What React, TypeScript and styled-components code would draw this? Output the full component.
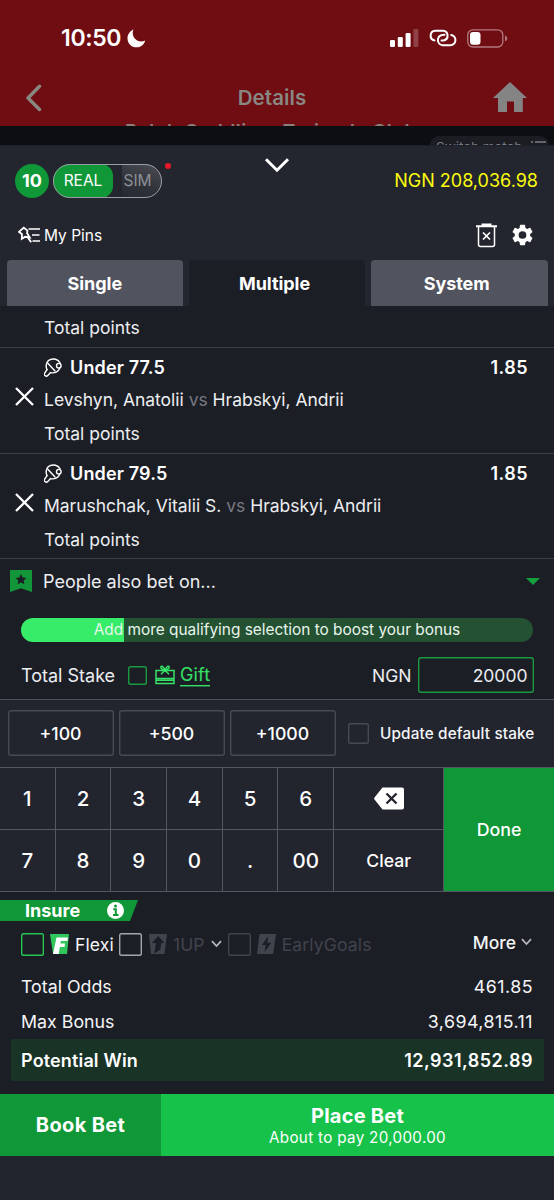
import React from "react";
import styled, { createGlobalStyle, css } from "styled-components";

const GlobalStyle = createGlobalStyle`
  *, *::before, *::after { box-sizing: border-box; }
  body { margin: 0; background: #22252e; }
  button { font: inherit; color: inherit; border: 0; background: none; padding: 0; margin: 0; }
  svg { display: block; flex: none; }
`;

const Screen = styled.div`
  width: 554px;
  height: 1200px;
  display: flex;
  flex-direction: column;
  overflow: hidden;
  background: #22252e;
  color: #f4f5f7;
  font-family: Inter, "Liberation Sans", sans-serif;
  font-size: 17.5px;
  white-space: nowrap;
`;

/* ---------- dimmed page behind the sheet ---------- */

const RedHeader = styled.header`
  height: 126px;
  flex: none;
  background: #700d13;
  display: flex;
  flex-direction: column;
  overflow: hidden;
`;

const StatusBar = styled.div`
  height: 76px;
  flex: none;
  padding: 0 46px 0 61px;
  display: flex;
  align-items: center;
  justify-content: space-between;
  color: #fff;
`;

const Clock = styled.div`
  display: flex;
  align-items: center;
  gap: 6px;
  font-size: 23px;
  font-weight: 600;
  letter-spacing: -0.35px;
`;

const StatusIcons = styled.div`
  display: flex;
  align-items: center;
  gap: 10px;
`;

const NavBar = styled.div`
  height: 44px;
  flex: none;
  padding: 0 26px 0 25px;
  display: grid;
  grid-template-columns: 36px 1fr 36px;
  align-items: center;
  color: #898782;
`;

const NavTitle = styled.h1`
  margin: 0;
  text-align: center;
  font-size: 20.5px;
  font-weight: 600;
  letter-spacing: 0.1px;
  padding: 0 9px 1px 0;
`;

const MatchName = styled.div`
  flex: none;
  margin: 0 0 0 125px;
  font-size: 19px;
  line-height: 24px;
  font-weight: 600;
  letter-spacing: 0.5px;
  color: #8b7f7c;
`;

const DarkStrip = styled.div`
  height: 19px;
  flex: none;
  background: #0d0e12;
  display: flex;
  justify-content: flex-end;
  padding: 10px 5px 0 0;
  overflow: hidden;
`;

const SwitchMatch = styled.div`
  width: 119px;
  height: 26px;
  flex: none;
  border-radius: 9px;
  background: #1b1d23;
  color: #7b7d84;
  font-size: 13.5px;
  line-height: 18px;
  padding: 2px 0 0 6px;
  display: flex;
  gap: 9px;
`;

/* ---------- sheet header ---------- */

const SheetHead = styled.section`
  height: 115px;
  flex: none;
  background: #23252f;
  border-top: 1px solid #1d1f27;
`;

const AccountRow = styled.div`
  position: relative;
  height: 69px;
  display: flex;
  align-items: center;
  padding: 0 16px 0 15px;
`;

const CountBadge = styled.span`
  width: 34px;
  height: 34px;
  border-radius: 50%;
  background: #109737;
  color: #fff;
  font-size: 18px;
  font-weight: 700;
  display: flex;
  align-items: center;
  justify-content: center;
`;

const ModeSwitch = styled.div`
  position: relative;
  width: 109px;
  height: 34px;
  margin-left: 4px;
  border-radius: 17px;
  display: flex;
  background: linear-gradient(200deg, #4d4f55, #30323a 60%, #262831) no-repeat 69px 0 / 40px 34px, #23252f;
  font-size: 15.5px;
  &::after {
    content: "";
    position: absolute;
    inset: 0;
    border: 1px solid #9a9da5;
    border-radius: 17px;
  }
`;

const ModeOption = styled.span<{ $on?: boolean }>`
  width: ${(p) => (p.$on ? 60 : 49)}px;
  display: flex;
  align-items: center;
  justify-content: center;
  border-radius: ${(p) => (p.$on ? "17px 12px 12px 17px" : "0 17px 17px 0")};
  background: ${(p) => (p.$on ? "#109737" : "none")};
  color: ${(p) => (p.$on ? "#fff" : "#8d8f96")};
`;

const RedDot = styled.i`
  position: absolute;
  left: 165px;
  top: 17px;
  width: 6px;
  height: 6px;
  border-radius: 50%;
  background: #e41827;
`;

const CollapseMark = styled.div`
  position: absolute;
  left: 264px;
  top: 11px;
`;

const Balance = styled.span`
  margin-left: auto;
  color: #fbfb0e;
  font-size: 18px;
`;

const PinsRow = styled.div`
  height: 40px;
  display: flex;
  align-items: center;
  padding: 0 21px 0 18px;
`;

const PinsLabel = styled.span`
  margin-left: 4px;
  font-size: 15.5px;
  color: #fff;
`;

const PinsActions = styled.div`
  margin-left: auto;
  display: flex;
  align-items: center;
  gap: 15px;
`;

const Tabs = styled.nav`
  height: 46px;
  flex: none;
  display: grid;
  grid-template-columns: repeat(3, 1fr);
  gap: 5.5px;
  padding: 0 6.5px;
  background: #23252f;
`;

const Tab = styled.button<{ $active?: boolean; $nudge?: number }>`
  border-radius: 4px 4px 0 0;
  background: ${(p) => (p.$active ? "#1c1e26" : "#51535e")};
  color: #fff;
  font-size: 18px;
  font-weight: 700;
  letter-spacing: -0.05px;
  padding-right: ${(p) => p.$nudge ?? 0}px;
`;

/* ---------- bet list ---------- */

const Body = styled.main`
  height: 393px;
  flex: none;
  background: #1c1e26;
  color: #eceef1;
`;

const Bet = styled.article<{ $cut?: boolean }>`
  height: ${(p) => (p.$cut ? 42 : 105.5)}px;
  display: grid;
  grid-template-columns: 44px 1fr;
  border-bottom: 1px solid #3d3f48;
  padding-right: 26px;
`;

const RemoveCell = styled.div`
  padding: 39px 0 0 15px;
`;

const BetLines = styled.div`
  display: flex;
  flex-direction: column;
`;

const Pick = styled.div`
  height: 40px;
  padding-bottom: 1px;
  display: flex;
  align-items: center;
  gap: 8px;
  font-size: 18px;
  font-weight: 600;
  letter-spacing: 0.15px;
  color: #fff;
`;

const Odds = styled.span`
  margin-left: auto;
  letter-spacing: 0.45px;
`;

const Players = styled.div`
  height: 24px;
  line-height: 24px;
  letter-spacing: -0.02px;
`;

const Versus = styled.span`
  color: #767982;
`;

const Market = styled.div`
  line-height: 24px;
  margin-top: 10px;
`;

const AlsoBet = styled.div`
  height: 45px;
  display: flex;
  align-items: center;
  padding: 0 14px 0 10px;
  font-size: 18px;
`;

const AlsoBetLabel = styled.span`
  margin-left: 11px;
  flex: 1;
`;

const BoostBar = styled.div`
  margin: 14px 21px 0;
  height: 24px;
  border-radius: 12px;
  background: linear-gradient(90deg, #36ec68 103px, #235132 103px);
  color: #e9f5ec;
  font-size: 15.4px;
  line-height: 24px;
  text-align: center;
`;

const StakeRow = styled.div`
  height: 57px;
  padding: 9px 20.5px 0 21px;
  display: flex;
  align-items: center;
`;

const CheckBox = styled.i<{ $size: number; $color: string }>`
  width: ${(p) => p.$size}px;
  height: ${(p) => p.$size}px;
  flex: none;
  box-shadow: inset 0 0 0 1.4px ${(p) => p.$color};
  border-radius: 2.5px;
`;

const StakeLabel = styled.span`
  width: 107px;
  font-size: 18px;
`;

const GiftLink = styled.span`
  margin-left: 8px;
  display: flex;
  align-items: center;
  gap: 5px;
  color: #36e167;
  font-size: 18px;
`;

const GiftText = styled.span`
  line-height: 20px;
  letter-spacing: 0.15px;
  box-shadow: 0 1.4px 0 #36e167;
`;

const Currency = styled.span`
  margin-left: auto;
  margin-right: 6px;
`;

const StakeInput = styled.div`
  width: 116px;
  height: 36px;
  box-shadow: inset 0 0 0 1.4px #1a9a40;
  border-radius: 3px;
  display: flex;
  align-items: center;
  justify-content: flex-end;
  padding-right: 6px;
  font-size: 17.5px;
`;

/* ---------- keypad ---------- */

const QuickRow = styled.section`
  height: 68px;
  flex: none;
  border-top: 1px solid #4f515a;
  background: #22242e;
  display: flex;
  align-items: center;
  padding: 0 19.5px 1px 8px;
`;

const QuickButton = styled.button`
  width: 106px;
  height: 46px;
  margin-right: 5px;
  padding-right: 1px;
  box-shadow: inset 0 0 0 1.4px #484a53;
  border-radius: 3px;
  color: #fff;
  font-size: 17.7px;
  font-weight: 500;
`;

const DefaultStakeBox = styled.div`
  flex: 1;
  margin-left: 7px;
  display: flex;
  align-items: center;
  justify-content: space-between;
  font-size: 15.3px;
  font-weight: 500;
  letter-spacing: 0.14px;
`;

const Keypad = styled.section`
  height: 125px;
  flex: none;
  display: grid;
  grid-template-columns: repeat(6, 55.7px) 110px 1fr;
  grid-template-rows: 62px 61px;
  border-top: 1px solid #555760;
  border-bottom: 1px solid #555760;
  background: #22242e;
`;

const keyFace = css`
  display: flex;
  align-items: center;
  justify-content: center;
  color: #fff;
  font-weight: 500;
`;

const Key = styled.button<{ $word?: boolean; $last?: boolean }>`
  ${keyFace}
  border-right: 1px solid #555760;
  border-bottom: ${(p) => (p.$last ? "0" : "1px solid #555760")};
  font-size: ${(p) => (p.$word ? 17.6 : 20.5)}px;
`;

const DoneKey = styled.button`
  ${keyFace}
  grid-column: 8;
  grid-row: 1 / 3;
  background: #109737;
  font-size: 17.8px;
`;

/* ---------- options and totals ---------- */

const Footer = styled.section`
  height: 202px;
  flex: none;
  background: #1c1e26;
`;

const InsureTag = styled.div`
  width: 138px;
  height: 21px;
  margin-top: 8px;
  padding: 0 14.5px 0 25px;
  clip-path: polygon(0 0, 100% 0, 130px 100%, 0 100%);
  background: #109737;
  color: #fff;
  display: flex;
  align-items: center;
  justify-content: space-between;
  font-size: 18px;
  font-weight: 700;
`;

const OptionRow = styled.div`
  height: 48px;
  padding: 0 22px 2px 21px;
  display: flex;
  align-items: center;
`;

const Option = styled.span<{ $dim?: boolean; $gap: number }>`
  display: flex;
  align-items: center;
  gap: 6px;
  margin-right: ${(p) => p.$gap}px;
  color: ${(p) => (p.$dim ? "#41434d" : "#f4f5f7")};
  letter-spacing: 0.15px;
`;

const More = styled.span`
  margin-left: auto;
  padding-bottom: 4px;
  display: flex;
  align-items: center;
  gap: 5px;
  font-weight: 500;
`;

const TotalRow = styled.div`
  height: 35px;
  padding: 0 21px;
  display: flex;
  align-items: center;
  justify-content: space-between;
  font-size: 17.8px;
`;

const Amount = styled.span`
  letter-spacing: 0.48px;
`;

const WinRow = styled.div`
  height: 42px;
  margin: 0 10px 0 11px;
  padding: 0 11px 0 10px;
  background: #193327;
  color: #fff;
  display: flex;
  align-items: center;
  justify-content: space-between;
  font-size: 18px;
  font-weight: 600;
  letter-spacing: 0.15px;
`;

const Actions = styled.footer`
  height: 62px;
  flex: none;
  display: grid;
  grid-template-columns: 161px 1fr;
  color: #fff;
`;

const BookBet = styled.button`
  background: #109737;
  font-size: 20px;
  font-weight: 700;
  letter-spacing: 0.35px;
`;

const PlaceBet = styled.button`
  background: #17c24a;
  display: flex;
  flex-direction: column;
  align-items: center;
  justify-content: center;
  font-size: 20px;
  line-height: 24px;
  font-weight: 700;
  letter-spacing: 0.25px;
`;

const PayNote = styled.span`
  font-size: 15.2px;
  line-height: 19px;
  font-weight: 400;
  letter-spacing: 0.33px;
`;

/* ---------- icons ---------- */

const Moon = () => (
  <svg width="19" height="19" viewBox="0 0 19 19">
    <path d="M6.600.6C5.800 2 5.600 3.200 5.800 4.900c.5 4.300 4.200 7.400 8.300 7.500 1.500 0 2.700-.3 4.100-1-1 4-4.500 6.900-8.700 6.900C4.500 18.300.5 14.400.5 9.400.5 5.400 3 2 6.600.6Z" fill="#fff" />
  </svg>
);

const Signal = () => (
  <svg width="29" height="18" viewBox="0 0 29 18" fill="#fff">
    <rect x="0" y="11" width="5" height="7" rx="1.300" />
    <rect x="7.800" y="8" width="5" height="10" rx="1.300" />
    <rect x="15.600" y="4" width="5" height="14" rx="1.300" />
    <rect x="23.400" y="0" width="5" height="18" rx="1.300" opacity=".22" />
  </svg>
);

const Hotspot = () => (
  <svg width="28" height="18" viewBox="0 0 28 18" fill="none" stroke="#fff" strokeWidth="2" strokeLinecap="round">
    <path d="M5.600 11.400A4.900 4.900 0 0 1 6.200 1.700H14A4.900 4.900 0 0 1 14.600 11.400L12.500 11.500" />
    <path d="M22.200 5.900A5.200 5.200 0 0 1 21.500 16.200H13.600A5.200 5.200 0 0 1 13.200 5.900L15.400 5.800" />
  </svg>
);

const Battery = () => (
  <svg width="41" height="19" viewBox="0 0 41 19">
    <rect x=".8" y=".8" width="35" height="17.200" rx="5" fill="none" stroke="#fff" strokeOpacity=".45" strokeWidth="1.300" />
    <rect x="3" y="3" width="10.500" height="12.800" rx="3" fill="#fff" />
    <path d="M38 6.500c3 .8 3 5 0 5.800Z" fill="#fff" fillOpacity=".45" />
  </svg>
);

const Back = () => (
  <svg width="18" height="28" viewBox="0 0 18 28" fill="none" stroke="#898782" strokeWidth="3.400" strokeLinecap="round" strokeLinejoin="round">
    <path d="M14.500 2.300 3 14l11.500 11.500" />
  </svg>
);

const Home = () => (
  <svg width="36" height="34" viewBox="0 -1 36 34">
    <path d="M18 0 35 16h-4.200v14h-8.800V19.500h-7V30H6V16H1Z" fill="#848484" />
  </svg>
);

const ListMark = () => (
  <svg width="15" height="12" viewBox="0 0 15 12" stroke="#7b7d84" strokeWidth="1.300">
    <path d="M0 4h2M4 4h11M0 8h2M4 8h11" />
  </svg>
);

const ChevronDown = () => (
  <svg width="26" height="17" viewBox="0 0 26 17" fill="none" stroke="#fff" strokeWidth="3">
    <path d="M2 2.200 13 13.200 24 2.200" />
  </svg>
);

const SmallChevron = () => (
  <svg width="11" height="8" viewBox="0 0 11 8" fill="none" stroke="#b9bbc0" strokeWidth="1.700">
    <path d="M1 1.200 5.500 6l4.500-4.800" />
  </svg>
);

const Pin = () => (
  <svg width="22" height="18" viewBox="0 0 22 18" fill="none" stroke="#fff" strokeWidth="1.500">
    <path d="M5.800 1.600 1 5.800l3 2.400-.2 4.600 3.400-2 4.600.7-2.700-4.300.3-2.600Z" strokeWidth="1.800" />
    <path d="M9.500 11l3.700 5.200" strokeWidth="1.900" />
    <path d="M10.500 3H22M14 9h7.500M14.500 15h7.500" />
  </svg>
);

const Bin = () => (
  <svg width="21" height="25" viewBox="0 0 21 25" fill="none" stroke="#fff" strokeWidth="1.500">
    <path d="M0 3.200h21M5.500 1.400h10" strokeWidth="2" />
    <path d="M2.500 4v17.500a2 2 0 0 0 2 2h12a2 2 0 0 0 2-2V4" />
    <path d="m7 9.500 7 7m0-7-7 7" strokeWidth="1.700" />
  </svg>
);

const Gear = () => (
  <svg width="21" height="22" viewBox="2.200 2 19.600 20" fill="#fff">
    <path d="M19.140 12.940c.04-.3.060-.61.060-.94s-.02-.64-.07-.94l2.030-1.580a.49.49 0 0 0 .12-.61l-1.920-3.320a.49.49 0 0 0-.59-.22l-2.390.96a7.040 7.040 0 0 0-1.620-.94l-.36-2.540a.48.48 0 0 0-.48-.41h-3.840a.47.47 0 0 0-.47.41l-.36 2.540c-.59.24-1.130.57-1.620.94l-2.390-.96a.48.48 0 0 0-.59.22L2.740 8.870a.47.47 0 0 0 .12.610l2.030 1.580c-.05.3-.09.63-.09.940s.02.640.07.940l-2.030 1.580a.49.49 0 0 0-.12.610l1.920 3.320c.12.220.370.290.590.220l2.390-.96c.5.380 1.030.700 1.620.940l.36 2.540c.05.240.240.410.480.410h3.840c.24 0 .44-.17.470-.41l.36-2.540c.59-.24 1.130-.56 1.620-.94l2.390.96c.22.080.470 0 .59-.22l1.920-3.320a.47.47 0 0 0-.12-.61l-2.010-1.580ZM12 15.600a3.600 3.600 0 1 1 0-7.200 3.600 3.600 0 0 1 0 7.200Z" />
  </svg>
);

const Cross = () => (
  <svg width="19" height="19" viewBox="0 0 19 19" stroke="#fff" strokeWidth="2.300">
    <path d="m1 1 17 17M18 1 1 18" />
  </svg>
);

const Paddle = () => (
  <svg width="18" height="19" viewBox="0 0 18 19" fill="none" stroke="#fff" strokeWidth="1.400" strokeLinejoin="round" strokeLinecap="round">
    <path d="M3 11.700C1.300 8 2.300 3.600 5.500 1.900 9.500 0 14.300 1 16 4.800" />
    <path d="M3.800 5.300 11 13" />
    <path d="M3 11.700.9 14.800a1.900 1.900 0 0 0 2.900 2.700L6.600 14.600" />
    <path d="M6.600 14.600c2.700.6 5.700-.1 7.500-1.900.9-.9 1.300-1.500 1.500-2.300" />
    <circle cx="14.800" cy="7.700" r="2.300" />
  </svg>
);

const Ribbon = () => (
  <svg width="22" height="23" viewBox="0 0 22 23">
    <path d="M0 0h22v22l-11-3.800L0 22Z" fill="#13963a" />
    <path d="m11 4 1.700 3.400 3.800.5-2.800 2.600.7 3.700-3.400-1.800-3.400 1.800.7-3.700-2.800-2.600 3.800-.5Z" fill="#1c1e26" />
  </svg>
);

const Caret = () => (
  <svg width="14" height="7" viewBox="0 0 14 7">
    <path d="M0 0h14L7 7Z" fill="#13a03c" />
  </svg>
);

const GiftBox = () => (
  <svg width="20" height="20" viewBox="0 0 20 20" fill="none" stroke="#36e167" strokeWidth="1.500">
    <path d="M1 5.500h18v8H1ZM1 13.500V18.600h18V13.500M1 15.200h18" />
    <path d="M10 5.200C8.700 2 7.600.8 6.500 1.200 5 2 6 4.500 10 5.200c4-.7 5-3.200 3.500-4C12.400.8 11.300 2 10 5.200ZM10 5.200l-4 4M10 5.200l4 4" />
  </svg>
);

const Backspace = () => (
  <svg width="30" height="23" viewBox="0 0 30 23">
    <path d="M8.500.5H28a2 2 0 0 1 2 2v18a2 2 0 0 1-2 2H8.500L.5 12.600a1.600 1.600 0 0 1 0-2Z" fill="#fff" />
    <path d="m12.500 6.500 10 10m0-10-10 10" stroke="#22242e" strokeWidth="2.300" />
  </svg>
);

const Info = () => (
  <svg width="17" height="17" viewBox="0 0 17 17">
    <circle cx="8.500" cy="8.500" r="8.500" fill="#fff" />
    <path d="M6.300 7.200H8.800v5.600M6 13h5.500" stroke="#109737" strokeWidth="2" fill="none" />
    <circle cx="8.500" cy="3.900" r="1.500" fill="#109737" />
  </svg>
);

const FlexiMark = () => (
  <svg width="19" height="20" viewBox="0 0 19 20">
    <path d="M0 0H19l-2 20H3Z" fill="#2fc65b" />
    <path d="M6.500 3.500H18l-.6 3.600h-6.600l-.4 2.500H15l-.5 3.300H9.800L8.800 20H3Z" fill="#fff" />
  </svg>
);

const OneUpMark = () => (
  <svg width="19" height="20" viewBox="0 0 19 20">
    <path d="M1 0H19l-2.500 20H3Z" fill="#41434d" />
    <path d="m10.200 2 6.300 7h-3.300l-.8 6.500-6 4 1.500-10.500H4Z" fill="#1c1e26" />
  </svg>
);

const BoltMark = () => (
  <svg width="19" height="20" viewBox="0 0 19 20">
    <path d="M2.500 0H19l-2.800 20H0Z" fill="#41434d" />
    <path d="M11.500 2 4.800 11h4L7.500 18l6.800-9.300h-4Z" fill="#1c1e26" />
  </svg>
);

/* ---------- data ---------- */

const bets = [
  { pick: "Under 77.5", odds: "1.85", home: "Levshyn, Anatolii", away: "Hrabskyi, Andrii" },
  { pick: "Under 79.5", odds: "1.85", home: "Marushchak, Vitalii S.", away: "Hrabskyi, Andrii" },
];

export default function App() {
  return (
    <Screen>
      <GlobalStyle />
      <RedHeader>
        <StatusBar>
          <Clock>10:50 <Moon /></Clock>
          <StatusIcons><Signal /><Hotspot /><Battery /></StatusIcons>
        </StatusBar>
        <NavBar>
          <Back />
          <NavTitle>Details</NavTitle>
          <Home />
        </NavBar>
        <MatchName>Ralph Cuddling, Trainade Club</MatchName>
      </RedHeader>
      <DarkStrip>
        <SwitchMatch>Switch match <ListMark /></SwitchMatch>
      </DarkStrip>

      <SheetHead>
        <AccountRow>
          <CountBadge>10</CountBadge>
          <ModeSwitch>
            <ModeOption $on>REAL</ModeOption>
            <ModeOption>SIM</ModeOption>
          </ModeSwitch>
          <RedDot />
          <CollapseMark><ChevronDown /></CollapseMark>
          <Balance>NGN 208,036.98</Balance>
        </AccountRow>
        <PinsRow>
          <Pin />
          <PinsLabel>My Pins</PinsLabel>
          <PinsActions><Bin /><Gear /></PinsActions>
        </PinsRow>
      </SheetHead>
      <Tabs>
        <Tab>Single</Tab>
        <Tab $active $nudge={5}>Multiple</Tab>
        <Tab $nudge={5}>System</Tab>
      </Tabs>

      <Body>
        <Bet $cut>
          <span />
          <Market>Total points</Market>
        </Bet>
        {bets.map((b) => (
          <Bet key={b.pick}>
            <RemoveCell><Cross /></RemoveCell>
            <BetLines>
              <Pick><Paddle />{b.pick}<Odds>{b.odds}</Odds></Pick>
              <Players>{b.home} <Versus>vs</Versus> {b.away}</Players>
              <Market>Total points</Market>
            </BetLines>
          </Bet>
        ))}
        <AlsoBet>
          <Ribbon />
          <AlsoBetLabel>People also bet on...</AlsoBetLabel>
          <Caret />
        </AlsoBet>
        <BoostBar>Add more qualifying selection to boost your bonus</BoostBar>
        <StakeRow>
          <StakeLabel>Total Stake</StakeLabel>
          <CheckBox $size={19} $color="#1a9a40" />
          <GiftLink><GiftBox /><GiftText>Gift</GiftText></GiftLink>
          <Currency>NGN</Currency>
          <StakeInput>20000</StakeInput>
        </StakeRow>
      </Body>

      <QuickRow>
        <QuickButton>+100</QuickButton>
        <QuickButton>+500</QuickButton>
        <QuickButton>+1000</QuickButton>
        <DefaultStakeBox>
          <CheckBox $size={21} $color="#484a53" />
          Update default stake
        </DefaultStakeBox>
      </QuickRow>
      <Keypad>
        {["1", "2", "3", "4", "5", "6"].map((k) => <Key key={k}>{k}</Key>)}
        <Key><Backspace /></Key>
        <DoneKey>Done</DoneKey>
        {["7", "8", "9", "0", ".", "00"].map((k) => <Key key={k} $last>{k}</Key>)}
        <Key $word $last>Clear</Key>
      </Keypad>

      <Footer>
        <InsureTag>Insure <Info /></InsureTag>
        <OptionRow>
          <Option $gap={5}><CheckBox $size={23} $color="#27c353" /><FlexiMark />Flexi</Option>
          <Option $dim $gap={6}><CheckBox $size={23} $color="#a4a6ad" /><OneUpMark />1UP<SmallChevron /></Option>
          <Option $dim $gap={0}><CheckBox $size={23} $color="#41434d" /><BoltMark />EarlyGoals</Option>
          <More>More <SmallChevron /></More>
        </OptionRow>
        <TotalRow><span>Total Odds</span><Amount>461.85</Amount></TotalRow>
        <TotalRow><span>Max Bonus</span><Amount>3,694,815.11</Amount></TotalRow>
        <WinRow><span>Potential Win</span><Amount>12,931,852.89</Amount></WinRow>
      </Footer>
      <Actions>
        <BookBet>Book Bet</BookBet>
        <PlaceBet>Place Bet<PayNote>About to pay 20,000.00</PayNote></PlaceBet>
      </Actions>
    </Screen>
  );
}
